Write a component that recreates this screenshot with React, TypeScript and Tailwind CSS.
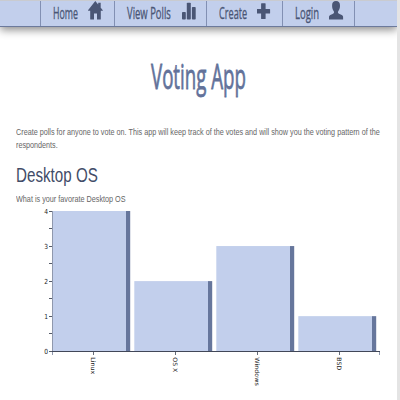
import { useLayoutEffect, useRef, useState, type ReactNode } from 'react';

/* Condenses a single line of text to the given column width. */
function Condensed({ width, className = '', children }: { width: number; className?: string; children: ReactNode }) {
  const ref = useRef<HTMLSpanElement>(null);
  const [scale, setScale] = useState(1);
  useLayoutEffect(() => {
    if (ref.current) setScale(width / ref.current.offsetWidth);
  }, [width]);
  return (
    <span className="block shrink-0" style={{ width }}>
      <span ref={ref} className={`inline-block origin-left whitespace-nowrap ${className}`} style={{ transform: `scaleX(${scale})` }}>
        {children}
      </span>
    </span>
  );
}

const HomeIcon = () => (
  <svg className="h-[19px] w-[15px] shrink-0" viewBox="0 0 15 19" fill="#4a5675">
    <path d="M7.3 0 14.800 9.2q.2 .5-.3 .5H12.8V18q0 .5-.5 .5H9V12.600H6V18.500H2.700q-.5 0-.5-.5V9.700H.3q-.5 0-.3-.5L7.300 0ZM10.200 1.700H12.700V7.500L10.200 5Z" />
  </svg>
);
const StatsIcon = () => (
  <svg className="h-[19px] w-[15px] shrink-0" viewBox="0 0 15 19" fill="#4a5675">
    <rect x="0" y="11" width="3.8" height="7.5" rx=".8" />
    <rect x="4.800" y="1.800" width="4" height="16.7" rx=".8" />
    <rect x="9.900" y="6" width="3.8" height="12.500" rx=".8" />
  </svg>
);
const PlusIcon = () => (
  <svg className="h-[19px] w-[15px] shrink-0" viewBox="0 0 15 19" fill="#4a5675">
    <path d="M4.600 2.200h3.500q.5 0 .5.500v5.200h4q.5 0 .5.500v3.500q0 .5-.5.500H8.600v5.100q0 .5-.5.500H4.600q-.5 0-.5-.500v-5.100H.1q-.5 0-.5-.500V8.400q0-.5.5-.5h4V2.700q0-.5.5-.5Z" />
  </svg>
);
const UserIcon = () => (
  <svg className="h-[19px] w-[15px] shrink-0" viewBox="0 0 15 19" fill="#4a5675">
    <path d="M7 .1C9.700 .1 11.200 2 11 5c0 2-.8 4-1.900 5.400-.5 1 .1 1.900 1.400 2.500l2.300 1.200c1 .6 1.300 1.300 1.300 2.300v2H0v-2c0-1 .3-1.700 1.300-2.300L3.600 12.900c1.200-.6 1.800-1.500 1.300-2.500C3.800 9 3.100 7 3.100 5 2.900 2 4.400 .1 7 .1Z" />
  </svg>
);

const items = [
  { label: 'Home', text: 25, cell: 'w-[74px]', gap: 'gap-[10px]', Icon: HomeIcon },
  { label: 'View Polls', text: 44, cell: 'w-[92px]', gap: 'gap-[11px]', Icon: StatsIcon },
  { label: 'Create', text: 28, cell: 'w-[76px]', gap: 'gap-[10px]', Icon: PlusIcon },
  { label: 'Login', text: 24, cell: 'w-[73px]', gap: 'gap-[10px]', Icon: UserIcon },
];

const bars = [
  { label: 'Linux', value: 4, x: 52, len: 17 },
  { label: 'OS X', value: 2, x: 134, len: 15 },
  { label: 'Windows', value: 3, x: 216, len: 28.5 },
  { label: 'BSD', value: 1, x: 298, len: 13 },
];

function Chart() {
  return (
    <svg className="block h-[195px] w-full" viewBox="0 205 397 195" fontFamily="'DejaVu Sans', sans-serif" fill="#222">
      {bars.map((b) => {
        const h = b.value * 35.05;
        return (
          <g key={b.label}>
            <rect x={b.x + 0.3} y={351.2 - h} width="74" height={h} fill="#c2cfec" />
            <rect x={b.x + 74} y={351.2 - h} width="4.200" height={h} fill="#66769c" />
            <path d={`M${b.x + 41.5} 351V355`} stroke="#666c78" />
            <text transform={`translate(${b.x + 38.5} 357.3) rotate(90)`} fontSize="6" textLength={b.len} lengthAdjust="spacingAndGlyphs">
              {b.label}
            </text>
          </g>
        );
      })}
      <path d="M52.500 211V355M379.500 351V355" stroke="#8f98ad" />
      <path d="M49 351.500H380" stroke="#414758" />
      {[0, 1, 2, 3, 4, 5, 6, 7, 8].map((t) => (
        <path key={t} d={`M49 ${Math.floor(351 - t * 17.5) + 0.5}H52`} stroke="#555b68" />
      ))}
      {[0, 1, 2, 3, 4].map((n) => (
        <text key={n} x="48" y={353.9 - n * 35} fontSize="7" textAnchor="end" textLength="3.800" lengthAdjust="spacingAndGlyphs">
          {n}
        </text>
      ))}
    </svg>
  );
}

export default function App() {
  return (
    <div className="flex h-[400px] w-[400px] overflow-hidden bg-white font-['Liberation_Sans',sans-serif] text-[#666]">
      <div className="flex h-full w-[397px] flex-col overflow-hidden">
        <nav className="flex h-[27px] shrink-0 border-t border-b border-t-[#c9cbd0] border-b-[#6c7a9c] bg-[#c2cfec] pl-[40px] font-['Open_Sans',sans-serif] font-medium text-[#4a5675] shadow-[0_3px_9px_rgba(0,0,0,0.45)]">
          {items.map(({ label, text, cell, gap, Icon }, i) => (
            <div key={label} className={`flex h-full shrink-0 border-l border-[#8290b3] pl-[12px] ${cell} ${gap} ${i === 3 ? 'border-r' : ''}`}>
              <Condensed width={text} className="text-[17px] leading-[23px] [-webkit-text-stroke:0.35px_#4a5675]">{label}</Condensed>
              <Icon />
            </div>
          ))}
        </nav>
        <header className="flex h-[98px] shrink-0 justify-center pt-[25px] font-['Open_Sans',sans-serif] font-medium text-[#62729a]">
          <Condensed width={95} className="text-[35px] leading-[48px] [-webkit-text-stroke:0.8px_#62729a]">Voting App</Condensed>
        </header>
        <main className="h-[80px] shrink-0 pl-[16px] text-[9.8px] leading-[13px]">
          <Condensed width={364}>Create polls for anyone to vote on. This app will keep track of the votes and will show you the voting pattern of the</Condensed>
          <Condensed width={42}>respondents.</Condensed>
          <h2 className="mt-[11px] mb-[4px] text-[20px] leading-[26px] text-[#424c68]">
            <Condensed width={82}>Desktop OS</Condensed>
          </h2>
          <Condensed width={109.500}>What is your favorate Desktop OS</Condensed>
        </main>
        <Chart />
      </div>
      <div className="w-[3px] bg-[#e4e4e4]" />
    </div>
  );
}
